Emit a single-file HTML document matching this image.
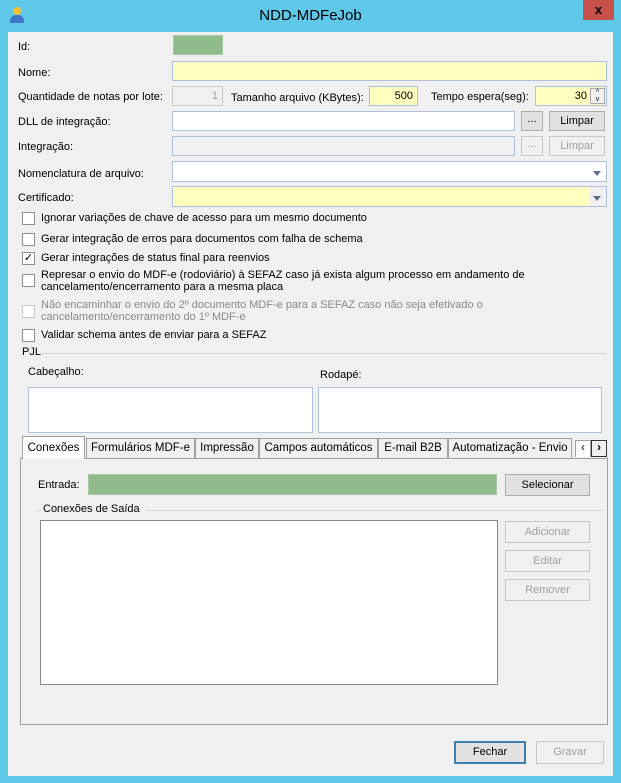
<!DOCTYPE html><html><head><meta charset="utf-8"><style>
body{margin:0;width:621px;height:783px;background:#5fc8e9;font-family:"Liberation Sans",sans-serif;font-size:11px;color:#000;position:relative;overflow:hidden}
div,span{position:absolute;box-sizing:border-box}
.c{left:8px;top:32px;width:605px;height:744px;background:#f0f0f0}
.l{white-space:nowrap}
.tb{border:1px solid #abc1dc;background:#fff}
.y{background:#ffffc0}
.btn{border:1px solid #adadad;background:#e1e1e1;text-align:center;line-height:19px}
.dis{color:#a0a0a0;border-color:#c8c8c8;background:#f0f0f0}
.cb{width:13px;height:13px;border:1px solid #8e8f8f;background:#fff}
.tab{top:438px;height:20px;border:1px solid #a0a0a0;border-bottom:none;background:#f0f0f0;text-align:center;line-height:19px;font-size:11.5px}
.dd{right:0;top:0;width:17px;height:100%;}
.dd:after{content:"";position:absolute;left:4px;top:9px;border:4px solid transparent;border-top:5px solid #5a6f8c}
</style></head><body>
<span style="left:10px;top:7px;width:14px;height:16px"><span style="left:3px;top:0;width:8px;height:8px;border-radius:50%;background:#f2c12e"></span><span style="left:0;top:8px;width:14px;height:8px;border-radius:6px 6px 1px 1px;background:#3d78c8"></span></span>
<div class="l" style="left:0;width:621px;top:7px;text-align:center;font-size:15px">NDD-MDFeJob</div>
<div style="left:583px;top:0;width:31px;height:20px;background:#c7504a;color:#fff;font-weight:bold;text-align:center;line-height:20px;font-size:13px;color:#000">x</div>
<div class="c"></div>
<div class="l" style="left:18px;top:41px">Id:</div>
<div style="left:173px;top:35px;width:50px;height:20px;background:#8fbc8a;border:1px solid #a8c8a8"></div>
<div class="l" style="left:18px;top:67px">Nome:</div>
<div class="tb y" style="left:172px;top:61px;width:435px;height:20px"></div>
<div class="l" style="left:18px;top:91px">Quantidade de notas por lote:</div>
<div class="tb dis" style="left:172px;top:86px;width:51px;height:20px;text-align:right;padding-right:4px;line-height:18px">1</div>
<div class="l" style="left:231px;top:92px">Tamanho arquivo (KBytes):</div>
<div class="tb y" style="left:369px;top:86px;width:49px;height:20px;text-align:right;padding-right:4px;line-height:18px">500</div>
<div class="l" style="left:431px;top:91px">Tempo espera(seg):</div>
<div class="tb y" style="left:535px;top:86px;width:72px;height:20px;text-align:right;padding-right:19px;line-height:18px">30<span style="right:1px;top:1px;width:15px;height:16px;background:#f0f0f0;border:1px solid #aaa;font-size:7px;line-height:7px;text-align:center">^<br>v</span></div>
<div class="l" style="left:18px;top:116px">DLL de integração:</div>
<div class="tb" style="left:172px;top:111px;width:343px;height:20px"></div>
<div class="btn" style="left:521px;top:111px;width:22px;height:20px;line-height:15px">...</div>
<div class="btn" style="left:549px;top:111px;width:56px;height:20px">Limpar</div>
<div class="l" style="left:18px;top:141px">Integração:</div>
<div class="tb dis" style="left:172px;top:136px;width:343px;height:20px;border-color:#abc1dc"></div>
<div class="btn dis" style="left:521px;top:136px;width:22px;height:20px;line-height:15px">...</div>
<div class="btn dis" style="left:549px;top:136px;width:56px;height:20px">Limpar</div>
<div class="l" style="left:18px;top:168px">Nomenclatura de arquivo:</div>
<div class="tb" style="left:172px;top:161px;width:435px;height:21px"><span class="dd"></span></div>
<div class="l" style="left:18px;top:192px">Certificado:</div>
<div class="tb y" style="left:172px;top:186px;width:435px;height:21px"><span class="dd" style="background:#f0f0f0"></span></div>
<div class="cb" style="left:22px;top:212px"></div><div class="l" style="left:41px;top:212px">Ignorar variações de chave de acesso para um mesmo documento</div>
<div class="cb" style="left:22px;top:233px"></div><div class="l" style="left:41px;top:233px">Gerar integração de erros para documentos com falha de schema</div>
<div class="cb" style="left:22px;top:252px;font-size:11px;line-height:10px;text-align:center">✓</div><div class="l" style="left:41px;top:252px">Gerar integrações de status final para reenvios</div>
<div class="cb" style="left:22px;top:274px"></div><div class="l" style="left:41px;top:269px;line-height:12px">Represar o envio do MDF-e (rodoviário) à SEFAZ caso já exista algum processo em andamento de<br>cancelamento/encerramento para a mesma placa</div>
<div class="cb" style="left:22px;top:305px;border-color:#c8c8c8"></div><div class="l" style="left:41px;top:299px;line-height:12px;color:#8a8a8a">Não encaminhar o envio do 2º documento MDF-e para a SEFAZ caso não seja efetivado o<br>cancelamento/encerramento do 1º MDF-e</div>
<div class="cb" style="left:22px;top:329px"></div><div class="l" style="left:41px;top:329px">Validar schema antes de enviar para a SEFAZ</div>
<div class="l" style="left:22px;top:346px">PJL</div>
<div style="left:42px;top:353px;width:565px;height:1px;background:#d5d5d5"></div>
<div class="l" style="left:28px;top:366px">Cabeçalho:</div>
<div class="l" style="left:320px;top:369px">Rodapé:</div>
<div class="tb" style="left:28px;top:387px;width:285px;height:46px"></div>
<div class="tb" style="left:318px;top:387px;width:284px;height:46px"></div>
<div style="left:20px;top:458px;width:588px;height:267px;border:1px solid #a0a0a0;background:#f0f0f0"></div>
<div class="tab" style="left:22px;top:436px;width:63px;height:23px;background:#fff;line-height:22px">Conexões</div>
<div class="tab" style="left:86px;width:109px">Formulários MDF-e</div>
<div class="tab" style="left:195px;width:64px">Impressão</div>
<div class="tab" style="left:259px;width:119px">Campos automáticos</div>
<div class="tab" style="left:378px;width:70px">E-mail B2B</div>
<div class="tab" style="left:448px;width:124px">Automatização - Envio</div>
<div class="tab" style="left:575px;width:16px;top:440px;height:17px;background:#fff;line-height:15px">‹</div>
<div class="tab" style="left:591px;width:16px;top:440px;height:17px;border:1px solid #333;background:#f0f0f0;line-height:15px;font-weight:bold">›</div>
<div class="l" style="left:38px;top:479px">Entrada:</div>
<div style="left:88px;top:474px;width:409px;height:21px;background:#8fbc8a;border:1px solid #a8c8a8"></div>
<div class="btn" style="left:505px;top:474px;width:85px;height:22px;line-height:20px">Selecionar</div>
<div class="l" style="left:43px;top:503px">Conexões de Saída</div>
<div style="left:37px;top:510px;width:4px;height:1px;background:#d5d5d5"></div>
<div style="left:146px;top:510px;width:456px;height:1px;background:#d5d5d5"></div>
<div style="left:40px;top:520px;width:458px;height:165px;border:1px solid #828790;background:#fff"></div>
<div class="btn dis" style="left:505px;top:521px;width:85px;height:22px;line-height:20px">Adicionar</div>
<div class="btn dis" style="left:505px;top:550px;width:85px;height:22px;line-height:20px">Editar</div>
<div class="btn dis" style="left:505px;top:579px;width:85px;height:22px;line-height:20px">Remover</div>
<div class="btn" style="left:454px;top:741px;width:72px;height:23px;border:2px solid #3c7fb1;line-height:19px">Fechar</div>
<div class="btn dis" style="left:536px;top:741px;width:68px;height:23px;line-height:21px">Gravar</div>
</body></html>
